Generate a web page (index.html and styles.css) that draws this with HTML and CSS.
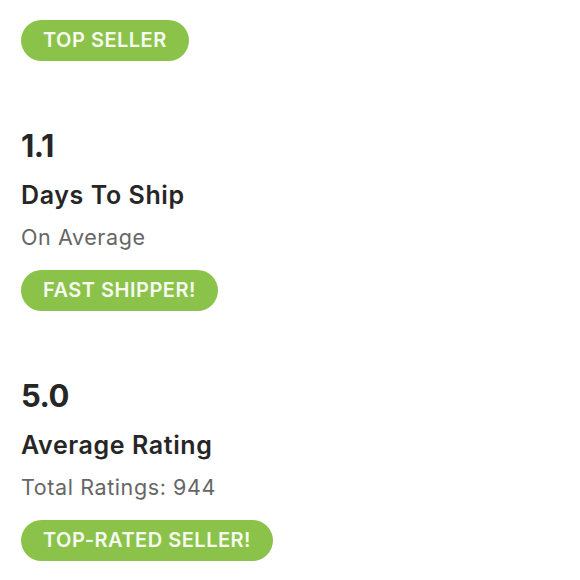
FILE: index.html
```html
<!DOCTYPE html>
<html>
<head>
<meta charset="utf-8">
<link rel="stylesheet" href="styles.css">
</head>
<body>
<div class="page">
  <section class="stat stat-cut">
    <span class="badge">TOP SELLER</span>
  </section>
  <section class="stat">
    <div class="value">1.1</div>
    <div class="title">Days To Ship</div>
    <div class="sub">On Average</div>
    <span class="badge">FAST SHIPPER!</span>
  </section>
  <section class="stat">
    <div class="value">5.0</div>
    <div class="title">Average Rating</div>
    <div class="sub">Total Ratings: 944</div>
    <span class="badge">TOP-RATED SELLER!</span>
  </section>
</div>
</body>
</html>
```
FILE: styles.css
```css
html, body {
  margin: 0;
  padding: 0;
  background: #ffffff;
}
body {
  font-family: "Inter", "Lato", sans-serif;
  color: #262626;
}
.page {
  padding: 20px 21px;
  display: flex;
  flex-direction: column;
}
.stat {
  display: flex;
  flex-direction: column;
  align-items: flex-start;
  margin-top: 65px;
}
.stat-cut {
  margin-top: 0;
}
.value {
  font-size: 31px;
  font-weight: 700;
  line-height: 40px;
  letter-spacing: -0.5px;
}
.title {
  margin-top: 13px;
  font-size: 25px;
  font-weight: 600;
  line-height: 32px;
  letter-spacing: 0.6px;
}
.sub {
  margin-top: 12px;
  font-size: 21.5px;
  font-weight: 400;
  line-height: 28px;
  letter-spacing: 0.6px;
  color: #666666;
}
.badge {
  display: inline-block;
  margin-top: 19px;
  height: 41px;
  line-height: 41px;
  padding: 0 22px;
  border-radius: 21px;
  background: #8bc34a;
  color: #f7faf0;
  font-size: 20px;
  font-weight: 600;
  letter-spacing: 0.5px;
}
.stat-cut .badge {
  margin-top: 0;
}
```
